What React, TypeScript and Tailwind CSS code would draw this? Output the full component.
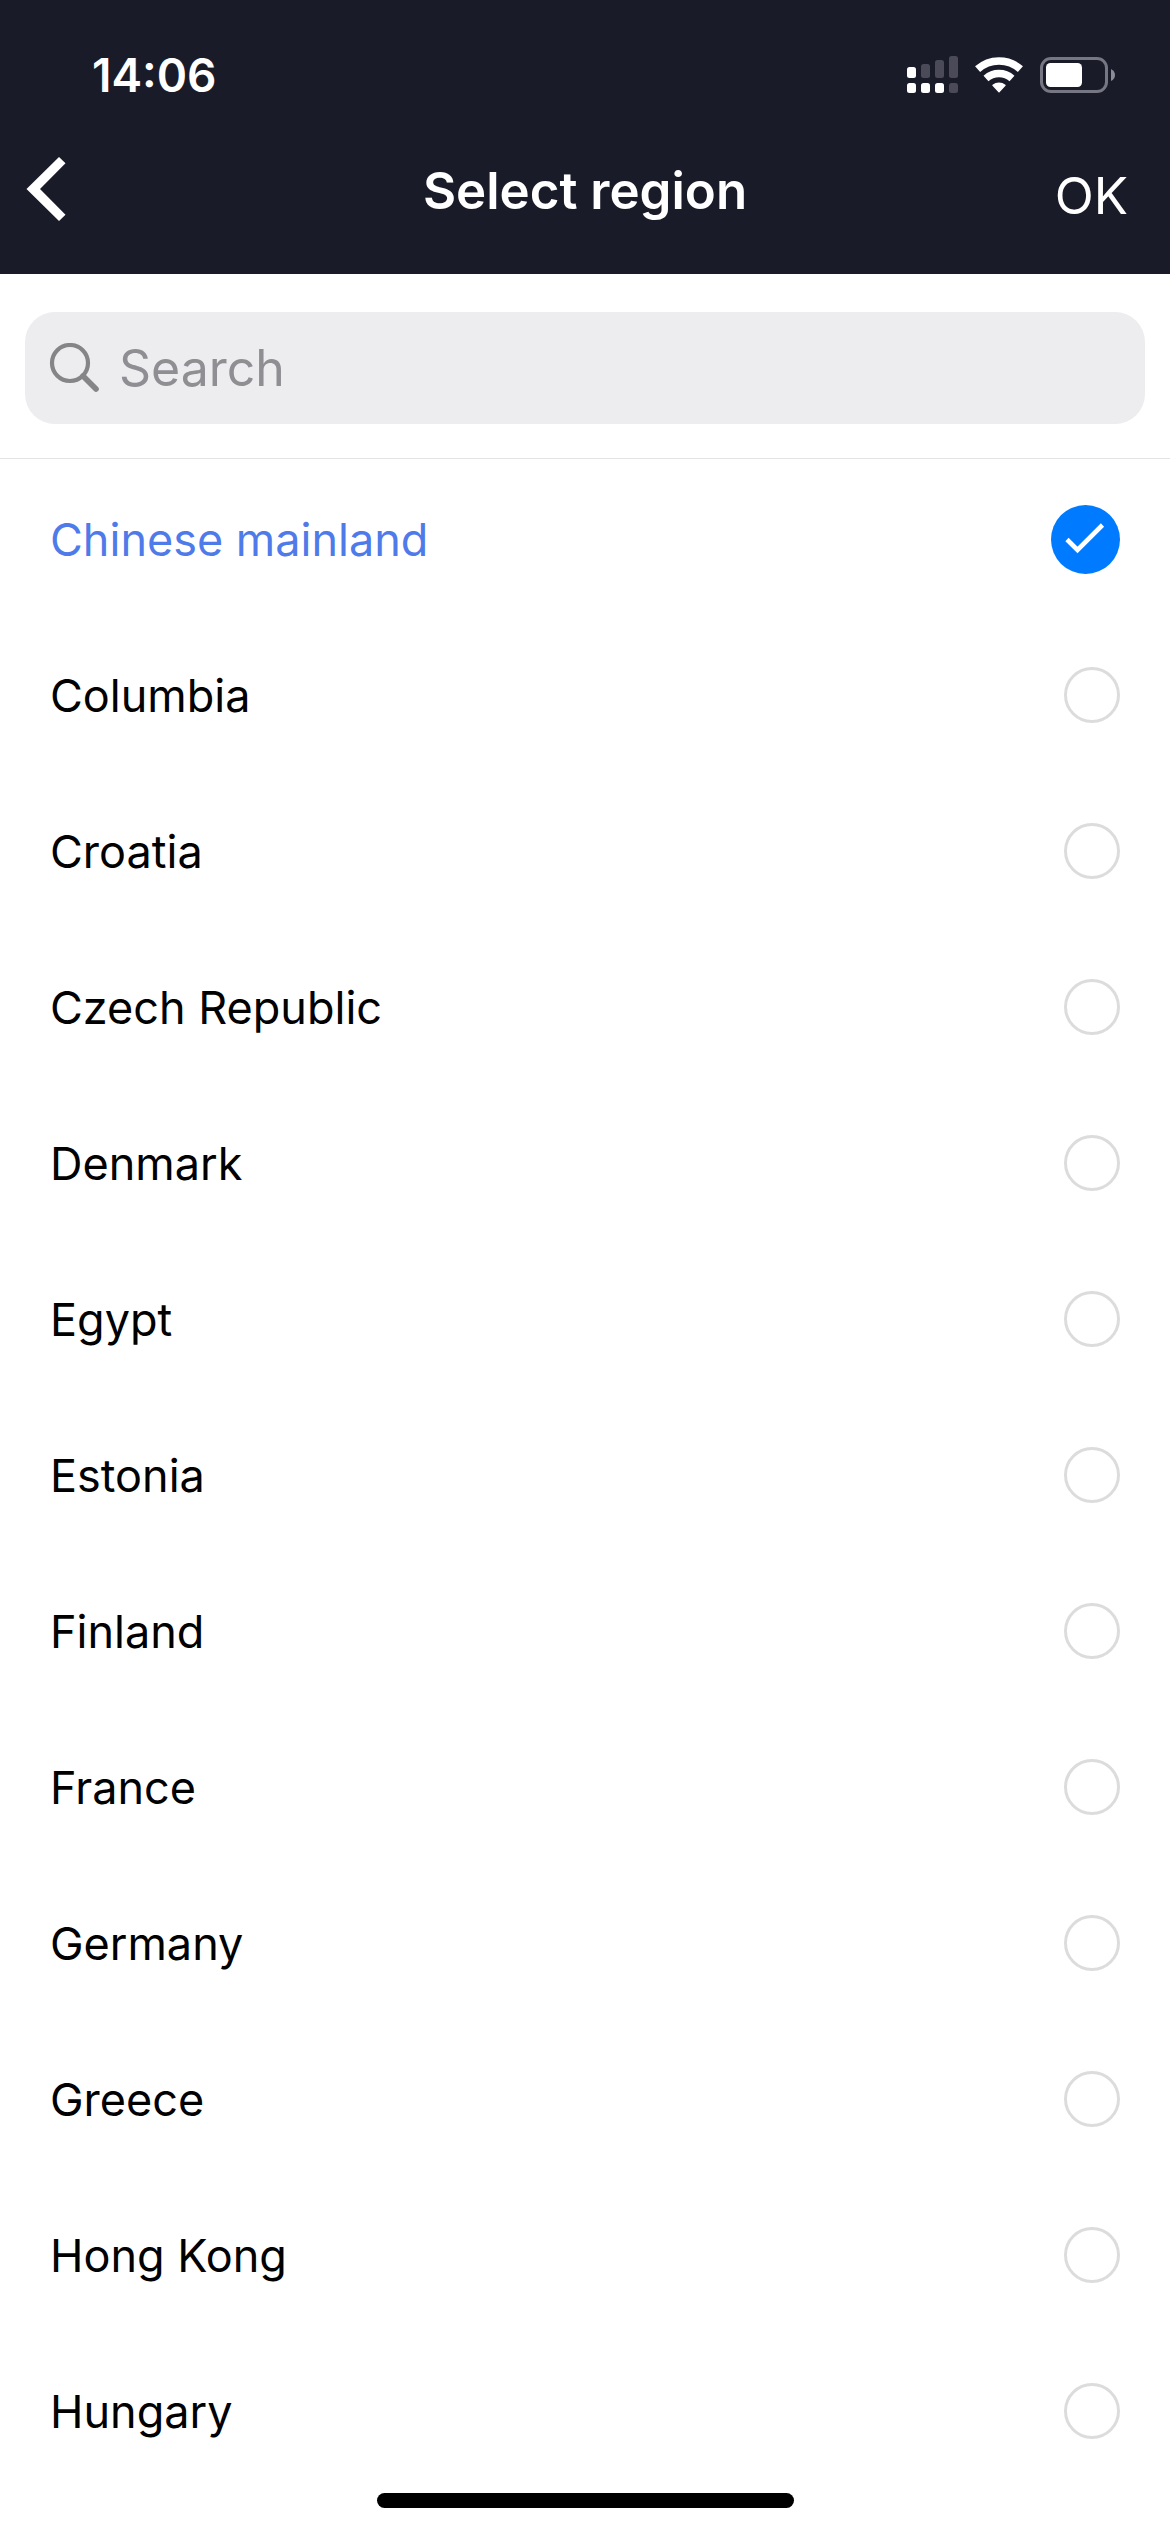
import { useState } from "react";

const REGIONS = [
  "Chinese mainland",
  "Columbia",
  "Croatia",
  "Czech Republic",
  "Denmark",
  "Egypt",
  "Estonia",
  "Finland",
  "France",
  "Germany",
  "Greece",
  "Hong Kong",
  "Hungary",
];

function SignalIcon() {
  return (
    <svg width="51" height="38" viewBox="0 0 51 38" fill="#fff" aria-hidden="true">
      <rect x="0" y="11" width="9" height="11" rx="2.5" />
      <g fill="#4a4a58">
        <rect x="14" y="8" width="9" height="14" rx="2.5" />
        <rect x="28" y="4" width="9" height="18" rx="2.5" />
        <rect x="42" y="0" width="9" height="22" rx="2.5" />
        <rect x="42" y="27" width="9" height="10" rx="2.5" />
      </g>
      <rect x="0" y="27" width="9" height="10" rx="2.5" />
      <rect x="14" y="27" width="9" height="10" rx="2.5" />
      <rect x="28" y="27" width="9" height="10" rx="2.5" />
    </svg>
  );
}

function WifiIcon() {
  return (
    <svg width="50" height="38" viewBox="0 0 50 38" fill="none" stroke="#fff" aria-hidden="true">
      <path d="M3.6 13.2A32 32 0 0 1 46.4 13.2" strokeWidth="7.6" />
      <path d="M12 22.5A19.5 19.5 0 0 1 38 22.5" strokeWidth="7.4" />
      <path
        d="M19 29.3A9.8 9.8 0 0 1 31 29.3L25 35.8Z"
        fill="#fff"
        strokeWidth="1.4"
        strokeLinejoin="round"
      />
    </svg>
  );
}

function BatteryIcon() {
  return (
    <svg width="76" height="36" viewBox="0 0 76 36" fill="none" aria-hidden="true">
      <rect x="1.5" y="1.5" width="65" height="33" rx="9.5" stroke="#777783" strokeWidth="3" />
      <rect x="6" y="6" width="36" height="24" rx="4.5" fill="#fff" />
      <path d="M71 12Q75 14 75 18T71 24Z" fill="#8c8c96" />
    </svg>
  );
}

function StatusBar() {
  return (
    <div className="flex h-[150px] items-center justify-between pr-[54px] pl-[92px]">
      <span className="text-[46px] leading-none font-semibold">14:06</span>
      <div className="flex items-center gap-4">
        <SignalIcon />
        <WifiIcon />
        <BatteryIcon />
      </div>
    </div>
  );
}

interface RegionRowProps {
  name: string;
  selected: boolean;
  onSelect: () => void;
}

function RegionRow({ name, selected, onSelect }: RegionRowProps) {
  return (
    <li>
      <label className="flex h-[156px] items-center justify-between px-[50px]">
        <span
          className={
            selected
              ? "text-[45px] leading-none text-[#4f7bea]"
              : "text-[45px] leading-none text-black"
          }
        >
          {name}
        </span>
        <span className="relative flex">
          <input
            type="radio"
            name="region"
            value={name}
            checked={selected}
            onChange={onSelect}
            className="size-14 appearance-none rounded-full border-3 border-[#dcdcdc] checked:size-[69px] checked:border-0 checked:bg-[#007aff]"
          />
          {selected && (
            <svg
              className="pointer-events-none absolute inset-0"
              width="69"
              height="69"
              viewBox="0 0 69 69"
              fill="none"
              stroke="#fff"
              strokeWidth="4.6"
              aria-hidden="true"
            >
              <path d="M16 34.5L26.5 45L51.5 20" />
            </svg>
          )}
        </span>
      </label>
    </li>
  );
}

export default function App() {
  const [selected, setSelected] = useState("Chinese mainland");
  const [query, setQuery] = useState("");

  const regions = REGIONS.filter((name) =>
    name.toLowerCase().includes(query.trim().toLowerCase())
  );

  return (
    <div className="flex min-h-screen flex-col bg-white font-[Inter,sans-serif]">
      <header className="bg-[#1a1b29] pb-11 text-white">
        <StatusBar />
        <div className="grid h-20 grid-cols-[1fr_auto_1fr] items-center px-[26px]">
          <button type="button" aria-label="Back" className="justify-self-start">
            <svg width="40" height="66" viewBox="0 0 40 66" fill="#fff" aria-hidden="true">
              <path d="M0.5 32L33 0L39.5 6.3L14 32L39.5 57.7L33 64Z" />
            </svg>
          </button>
          <h1 className="text-[51px] leading-none font-semibold">Select region</h1>
          <button type="button" className="justify-self-end pt-2.5 pr-4 text-[51px] leading-none">
            OK
          </button>
        </div>
      </header>

      <div className="border-b border-[#e3e3e5] px-[25px] pt-[38px] pb-[34px]">
        <label className="flex h-28 items-center gap-5 rounded-[30px] bg-[#ededef] px-6">
          <svg
            width="50"
            height="50"
            viewBox="0 0 50 50"
            fill="none"
            stroke="#858588"
            className="shrink-0"
            aria-hidden="true"
          >
            <circle cx="21" cy="20" r="18" strokeWidth="4.2" />
            <path d="M34 33L47 46" strokeWidth="5.6" strokeLinecap="round" />
          </svg>
          <input
            type="text"
            value={query}
            onChange={(e) => setQuery(e.target.value)}
            placeholder="Search"
            aria-label="Search"
            className="w-full bg-transparent text-[50px] text-black outline-none placeholder:text-[#8e8e93]"
          />
        </label>
      </div>

      <ul className="grow pt-0.5">
        {regions.map((name) => (
          <RegionRow
            key={name}
            name={name}
            selected={name === selected}
            onSelect={() => setSelected(name)}
          />
        ))}
      </ul>

      <footer className="flex justify-center pt-1 pb-6">
        <div className="h-[15px] w-[417px] rounded-full bg-black" />
      </footer>
    </div>
  );
}
